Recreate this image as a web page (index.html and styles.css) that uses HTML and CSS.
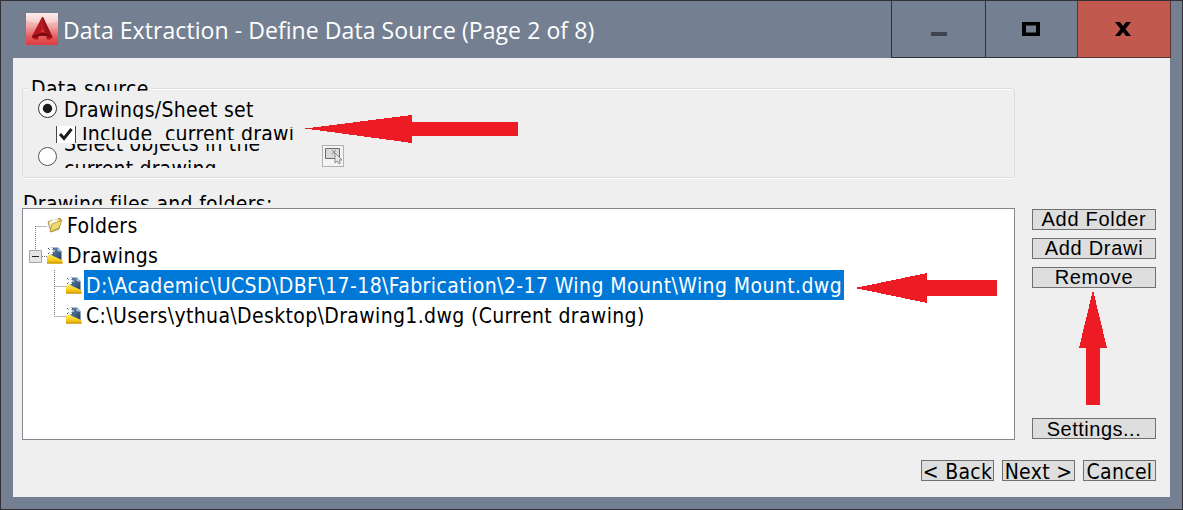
FILE: index.html
```html
<!DOCTYPE html>
<html lang="en">
<head>
<meta charset="utf-8">
<title>Data Extraction</title>
<link rel="stylesheet" href="styles.css">
</head>
<body>
<svg width="0" height="0" class="defs" aria-hidden="true">
  <defs>
    <linearGradient id="sheet" x1="0" y1="0" x2="1" y2="1"><stop offset="0" stop-color="#6d8fb6"/><stop offset="1" stop-color="#1f3a5a"/></linearGradient>
    <linearGradient id="gold" x1="0" y1="0" x2="0" y2="1"><stop offset="0" stop-color="#fff07a"/><stop offset=".5" stop-color="#fbd52a"/><stop offset="1" stop-color="#e2ac00"/></linearGradient>
    <linearGradient id="paper" x1="0" y1="0" x2="1" y2="1"><stop offset="0" stop-color="#fff6b0"/><stop offset="1" stop-color="#c0a030"/></linearGradient>
    <symbol id="dwg" viewBox="0 0 16 17">
      <path d="M3 .5h8l3.500 4V14L3 9z" fill="url(#sheet)"/>
      <path d="M10.500 .5l4 4.500-4-1z" fill="#b4c7dc"/>
      <path d="M0 1h6v6H0z" fill="#fff"/>
      <path d="M4 0v2.500M4 5.500V8M.5 4H3M5.500 4H8" stroke="#fff"/>
      <path d="M1 1l1.500 1.500M5.500 2.500L7 1M1 7l1.500-1.500M5.500 5.500L7 7" stroke="#2f527c"/>
      <path d="M0 9l3-2 3 2 7 3 2.500 1.500v3H0z" fill="url(#gold)"/>
      <path d="M0 16h15.500" stroke="#c69300"/>
    </symbol>
  </defs>
</svg>
<div class="window">
  <header class="titlebar">
    <svg class="logo" viewBox="0 0 32 32">
      <defs><linearGradient id="lg" x1="0" y1="0" x2="0" y2="1"><stop offset="0" stop-color="#fbe3df"/><stop offset=".4" stop-color="#f0aaa6"/><stop offset=".75" stop-color="#e45a5c"/><stop offset="1" stop-color="#dc3b40"/></linearGradient></defs>
      <path d="M0 0h32v32H0z" fill="url(#lg)"/>
      <path d="M0 0h32v8Q16 14 0 7z" fill="#fff" opacity=".3"/>
      <path d="M16 4L6 23v2l3 1.500h3l1-3.500h7l1 3.500h3l2.500-2L17 4z" fill="#b5181e"/>
      <path d="M16 4h1l9.500 20-3 .5L19 18z" fill="#94121a"/>
      <path d="M16.500 15.500L18.500 19h-4z" fill="#c9383c"/>
      <path d="M6 23l8-3h6l6.500 4-6.500-1h-7l-4 2z" fill="#7c0c12"/>
    </svg>
    <h1 class="title">Data Extraction - Define Data Source (Page 2 of 8)</h1>
    <div class="controls">
      <span class="control minimize"><svg width="16" height="4"><path d="M0 0h16v4H0z" fill="#3e434d"/></svg></span>
      <span class="control maximize"><svg width="18" height="14"><path d="M2 1.500h14v11H2z" fill="none" stroke="#000" stroke-width="4"/></svg></span>
      <span class="control close"><svg width="16" height="14"><path d="M0 0h5l3 4 3-4h5l-5.500 7L16 14h-5l-3-4-3 4H0l5.500-7z" fill="#000"/></svg></span>
    </div>
  </header>
  <main class="client">
    <section class="group">
      <div class="legend">Data source</div>
      <div class="option first"><svg class="radio" viewBox="0 0 20 20"><circle cx="9.500" cy="9.500" r="9" fill="#fff" stroke="#333"/><circle cx="9.500" cy="9.500" r="4.700" fill="#1c1c1c"/></svg><span class="label sheet">Drawings/Sheet set</span></div>
      <div class="option check"><svg class="box" viewBox="0 0 20 17"><path d="M0 0h20v17H0z" fill="#fff"/><path d="M.5 0v17M19.500 0v17" stroke="#444"/><path d="M4 8l4 4.500L15.500 3" fill="none" stroke="#1c1c1c" stroke-width="3"/></svg><span class="label include">Include&nbsp; current drawi</span></div>
      <div class="option second"><svg class="radio" viewBox="0 0 20 20"><circle cx="9.500" cy="9.500" r="9" fill="#fff" stroke="#555"/></svg><span class="label select"><span class="lines-text">Select objects in the<br>current drawing</span></span>
        <span class="pick"><svg width="20" height="20" viewBox="0 0 20 20"><path d="M2.500 2.500h14v10h-14z" fill="#d9d9d9" stroke="#6a6a6a"/><path d="M9 4l4 4M13 4l-4 4" stroke="#888"/><path d="M12 7v10l2-2 2 3 1.500-1-1.500-3h3z" fill="#e8e8e8" stroke="#777" stroke-width=".8"/></svg></span>
      </div>
    </section>
    <div class="caption">Drawing files and folders:</div>
    <section class="files">
      <div class="tree">
        <div class="node"><svg class="lines" width="24" height="30"><path d="M12.500 16v14M12.500 16.500h12" class="dots"/></svg>
          <svg class="icon" viewBox="0 0 16 17"><path d="M1 5l4-2 1 1 7-3 1 1-2 10-8 3z" fill="url(#paper)" stroke="#94803a" stroke-width=".8"/><path d="M3 4l8-2-1 7-6 3z" fill="#fffbe0"/><path d="M3 15l2-8 10-4-3 8z" fill="#ecd770" stroke="#a98c2c" stroke-width=".7"/></svg>
          <span class="name">Folders</span></div>
        <div class="node"><svg class="lines" width="24" height="30"><path d="M12.500 0v10M19 16.500h5" class="dots"/><path d="M6.500 10.500h12v12h-12z" fill="#e4e4e4" stroke="#a6a6a6"/><path d="M9 16.500h7" stroke="#222"/></svg>
          <svg class="icon"><use href="#dwg"/></svg><span class="name">Drawings</span></div>
        <div class="node child"><svg class="lines" width="24" height="30"><path d="M12.500 0v30M12.500 16.500h12" class="dots"/></svg>
          <svg class="icon"><use href="#dwg"/></svg><span class="name selected">D:\Academic\UCSD\DBF\17-18\Fabrication\2-17 Wing Mount\Wing Mount.dwg</span></div>
        <div class="node child"><svg class="lines" width="24" height="30"><path d="M12.500 0v16M12.500 16.500h12" class="dots"/></svg>
          <svg class="icon"><use href="#dwg"/></svg><span class="name">C:\Users\ythua\Desktop\Drawing1.dwg (Current drawing)</span></div>
      </div>
      <div class="side">
        <button class="btn">Add Folder</button><button class="btn">Add Drawi</button><button class="btn">Remove</button><button class="btn settings">Settings...</button>
      </div>
    </section>
    <footer class="nav"><button class="btn step">&lt; Back</button><button class="btn step">Next &gt;</button><button class="btn step">Cancel</button></footer>
  </main>
  <svg class="arrows" viewBox="0 0 1183 510">
    <path d="M305 128.500L412 115v7h106v14H412v7z"/>
    <path d="M855 288l72-15v7h70v16h-70v7z"/>
    <path d="M1093 290l14 58h-7v57h-14v-57h-7z"/>
  </svg>
</div>
</body>
</html>
```
FILE: styles.css
```css
* { box-sizing: border-box; }
body { margin: 0; font-family: "DejaVu Sans Condensed", "DejaVu Sans", sans-serif; font-stretch: condensed; font-size: 21px; letter-spacing: .36px; color: #000; }
.defs { position: absolute; }
.window { position: relative; width: 1183px; height: 510px; border: 1px solid #303036; background: #748092; overflow: hidden; }
.titlebar { display: flex; height: 57px; padding: 0 11px 0 25px; }
.logo { width: 32px; height: 32px; margin-top: 12px; }
.title { flex: 1; margin: 0 0 0 5px; font: 400 23px/59px "Open Sans", sans-serif; letter-spacing: .07px; color: #fff; white-space: nowrap; }
.controls { display: flex; }
.control { display: flex; align-items: center; justify-content: center; height: 57px; border-left: 1px solid #303036; border-bottom: 1px solid #303036; }
.minimize { width: 94px; padding-top: 9px; }
.maximize { width: 92px; padding-right: 2px; }
.close { width: 94px; padding-right: 2px; background: #c2594f; border-right: 1px solid #5a3335; border-color: #5a3335; }
.client { display: flex; flex-direction: column; width: 1157px; height: 439px; margin-left: 12px; padding: 30px 14px 0 9px; background: #efefef; }
.group { width: 993px; height: 90px; border: 1px solid #d5dfe5; border-radius: 3px; box-shadow: inset 0 1px #fff, 0 1px #fff; }
.legend { width: 122px; height: 11px; margin: -9px 0 0 6px; padding-left: 2px; line-height: 19px; background: #efefef; overflow: hidden; white-space: nowrap; }
.option { display: flex; white-space: nowrap; }
.radio { width: 20px; height: 20px; }
.label { display: block; overflow: hidden; }
.first { margin: 8px 0 0 15px; }
.sheet { height: 20px; margin-left: 6px; line-height: 22px; letter-spacing: .3px; }
.check { height: 17px; margin: 7px 0 0 33px; }
.box { width: 20px; height: 17px; }
.include { height: 13px; margin: 1px 0 0 6px; line-height: 14px; letter-spacing: .24px; }
.second { margin: 1px 0 0 15px; align-items: flex-start; }
.second .radio { margin-top: 3px; }
.select { width: 240px; height: 24px; margin-left: 6px; line-height: 25px; letter-spacing: .18px; }
.lines-text { display: block; margin-top: -12px; }
.pick { width: 22px; height: 22px; margin: 1px 0 0 18px; border: 1px solid #adb2b5; background: #f4f4f4; }
.caption { height: 14px; margin-top: 13px; padding-left: 1px; line-height: 26px; overflow: hidden; white-space: nowrap; letter-spacing: .3px; }
.files { display: flex; gap: 17px; height: 232px; margin-top: 3px; }
.tree { width: 993px; padding-top: 1px; border: 1px solid #828790; background: #fff; }
.node { display: flex; align-items: center; height: 30px; white-space: nowrap; }
.child { padding-left: 19px; }
.lines { flex: none; }
.dots { fill: none; stroke: #777; stroke-width: 1; stroke-dasharray: 1 1; }
.icon { flex: none; width: 16px; height: 17px; }
.name { height: 30px; margin-left: 2px; padding: 0 2px; line-height: 32px; }
.selected { padding-right: 2px; background: #0078d7; color: #fff; letter-spacing: .41px; }
.side { display: flex; flex-direction: column; gap: 8px; width: 124px; padding: 1px 0; }
.btn { display: block; height: 21px; padding: 0; border: 1px solid #707070; background: #dedede; font: 20px/19px "Liberation Sans", sans-serif; letter-spacing: .7px; color: #000; white-space: nowrap; }
.settings { margin-top: auto; padding-top: 1px; letter-spacing: .5px; }
.nav { display: flex; justify-content: flex-end; gap: 8px; margin-top: 20px; }
.step { width: 73px; padding-top: 2px; font: 21px/19px "DejaVu Sans Condensed", "DejaVu Sans", sans-serif; font-stretch: condensed; letter-spacing: .3px; }
.arrows { position: absolute; left: -1px; top: -1px; width: 1183px; height: 510px; fill: #ed1c24; pointer-events: none; shape-rendering: crispEdges; }
```
